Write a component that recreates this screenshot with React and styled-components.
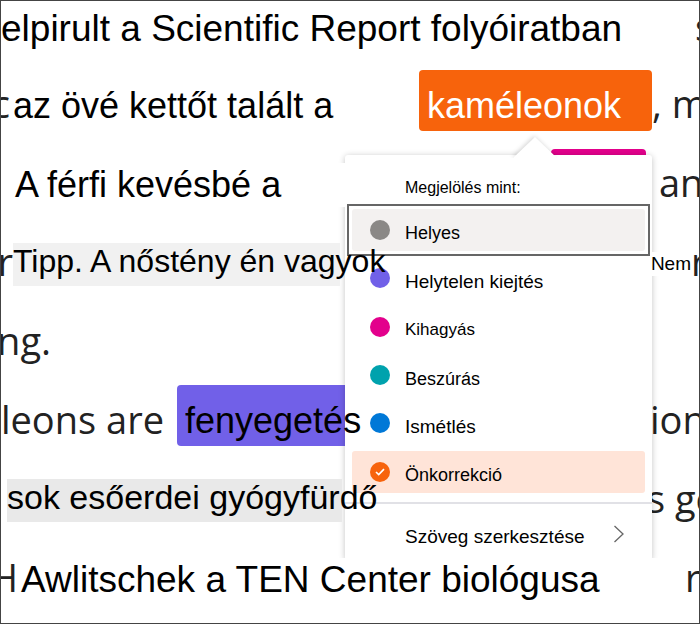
import React, { useState } from "react";
import styled, { createGlobalStyle } from "styled-components";

const MARKS = [
  { id: "correct", label: "Helyes", color: "#8a8886", size: 18 },
  { id: "mispronounced", label: "Helytelen kiejtés", color: "#7160e8", size: 19 },
  { id: "omission", label: "Kihagyás", color: "#e3008c", size: 17 },
  { id: "insertion", label: "Beszúrás", color: "#00a2ad", size: 18 },
  { id: "repetition", label: "Ismétlés", color: "#0078d7", size: 19 },
  { id: "selfCorrection", label: "Önkorrekció", color: "#f7630c", size: 18 },
];

export default function App() {
  return (
    <>
      <GlobalStyle />
      <Passage>
        <Line>
          <Text $size={37}>elpirult a Scientific Report folyóiratban</Text>
          <Trailing $width={4}>s</Trailing>
        </Line>
        <Line>
          <Leading $width={12} $gap={3}>c</Leading>
          <Text $size={36}>az övé kettőt talált a</Text>
          <Anchor>
            <Mark $color="#f7630c" $text="#fff" $width={233}>
              <span>kaméleonok</span>
            </Mark>
            <MarkMenu />
          </Anchor>
          <Trailing $width={47} $flush>, m</Trailing>
        </Line>
        <Line>
          <Leading $width={14} $gap={12}>.</Leading>
          <Text $size={36} $flex="0 1 330px">A férfi kevésbé a</Text>
          <Mark $color="#e3008c" $width={95} $push />
          <Trailing $width={53} $gap={13} $flush>an</Trailing>
        </Line>
        <Line>
          <Leading $width={12}>r</Leading>
          <Shaded $size={32} $color="#f1f1f1" $width={327}>
            Tipp. A nőstény én vagyok
          </Shaded>
          <Note>Nem</Note>
          <Trailing $width={8} $flush>r</Trailing>
        </Line>
        <Line>
          <Leading $width={50}>ng.</Leading>
        </Line>
        <Line>
          <Leading $width={176} $gap={13}>leons are</Leading>
          <Mark $color="#7160e8" $text="#000" $width={190}>
            <span>fenyegetés</span>
          </Mark>
          <Trailing $width={49}>ion</Trailing>
        </Line>
        <Line>
          <Leading $width={6} />
          <Shaded $size={34} $color="#e9e9e9" $width={335}>
            sok esőerdei gyógyfürdő
          </Shaded>
          <Trailing $width={52}>s ge</Trailing>
        </Line>
        <Line>
          <Leading $width={20} $gap={3}>H</Leading>
          <Text $size={37} $flex="1">Awlitschek a TEN Center biológusa</Text>
          <Trailing $width={14} $flush>r</Trailing>
        </Line>
      </Passage>
    </>
  );
}

function MarkMenu() {
  const [selected, setSelected] = useState("selfCorrection");

  return (
    <Menu role="menu" aria-labelledby="mark-menu-title">
      <Caret viewBox="0 0 42 21" aria-hidden="true">
        <path d="M0 20 L21 0 L42 20 V21 H0 Z" fill="#fff" />
      </Caret>
      <Title id="mark-menu-title">Megjelölés mint:</Title>
      <Items>
        {MARKS.map((mark, index) => (
          <Item
            key={mark.id}
            type="button"
            role="menuitemradio"
            aria-checked={selected === mark.id}
            $focused={index === 0}
            $selected={selected === mark.id}
            onClick={() => setSelected(mark.id)}
          >
            <Dot $color={mark.color}>
              {selected === mark.id && <Check />}
            </Dot>
            <Label $size={mark.size}>{mark.label}</Label>
          </Item>
        ))}
      </Items>
      <EditItem type="button" role="menuitem">
        <Label $size={19}>Szöveg szerkesztése</Label>
        <svg width="12" height="18" viewBox="0 0 12 18" aria-hidden="true">
          <path d="M1.5 1 L10 9 L1.5 17" fill="none" stroke="#666" strokeWidth="1.3" />
        </svg>
      </EditItem>
    </Menu>
  );
}

function Check() {
  return (
    <svg width="10" height="8" viewBox="0 0 10 8" aria-hidden="true">
      <path d="M1 4 L3.7 6.5 L9 1.2" fill="none" stroke="#fff" strokeWidth="1.7" />
    </svg>
  );
}

const GlobalStyle = createGlobalStyle`
  * {
    box-sizing: border-box;
  }

  body {
    margin: 0;
    background: #fff;
    color: #000;
    font-family: "Liberation Sans", Arial, sans-serif;
  }
`;

const Passage = styled.main`
  display: grid;
  grid-template-rows: 66px repeat(7, 1fr);
  min-height: 100vh;
  padding-bottom: 4px;
  border: 1px solid #444;
  overflow: hidden;
`;

const Line = styled.div`
  display: flex;
  align-items: center;
  min-width: 0;
  white-space: nowrap;

  &:first-child {
    padding-bottom: 11px;
  }
`;

/* passage text is drawn over the open menu */
const Text = styled.span`
  position: relative;
  z-index: 2;
  flex: ${(props) => props.$flex || "none"};
  background: #fff;
  font-size: ${(props) => props.$size}px;
  line-height: 44px;
`;

const Shaded = styled(Text)`
  width: ${(props) => props.$width}px;
  padding-bottom: 7px;
  background: ${(props) => props.$color};
  line-height: 36px;
`;

const Fragment = styled.span`
  flex: none;
  width: ${(props) => props.$width}px;
  padding-bottom: 6px;
  overflow: hidden;
  color: #222;
  font-family: "Open Sans", "Noto Sans", sans-serif;
  font-size: 38px;
  line-height: 52px;
`;

const Leading = styled(Fragment)`
  display: flex;
  justify-content: flex-end;
  padding-right: ${(props) => props.$gap || 0}px;
`;

const Trailing = styled(Fragment)`
  margin-left: ${(props) => (props.$flush ? 0 : "auto")};
  padding-left: ${(props) => props.$gap || 0}px;
`;

const Anchor = styled.div`
  position: relative;
  margin-left: auto;
`;

const Mark = styled.mark`
  display: block;
  flex: none;
  width: ${(props) => props.$width}px;
  height: 61px;
  margin-bottom: 12px;
  margin-left: ${(props) => (props.$push ? "auto" : 0)};
  padding: 14px 0 0 8px;
  border-radius: 4px;
  background: ${(props) => props.$color};
  color: ${(props) => props.$text};
  font-size: 36px;
  line-height: 44px;

  span {
    position: relative;
    z-index: 2;
  }
`;

const Note = styled.span`
  position: relative;
  z-index: 2;
  margin-left: auto;
  background: #fff;
  font-size: 19px;
  line-height: 24px;
`;

const Menu = styled.div`
  position: absolute;
  z-index: 1;
  top: calc(100% + 12px);
  right: 0;
  width: 307px;
  padding-top: 18px;
  border-radius: 3px;
  background: #fff;
  box-shadow: 0 1px 6px rgba(0, 0, 0, 0.24);
`;

const Caret = styled.svg`
  position: absolute;
  top: -18px;
  left: 169px;
  width: 42px;
  height: 21px;
  filter: drop-shadow(-1px -1px 2px rgba(0, 0, 0, 0.16));
  clip-path: inset(-6px -6px 0 -6px);
`;

const Title = styled.div`
  padding: 6px 60px;
  font-size: 16px;
  line-height: 18px;
`;

const Items = styled.div`
  display: flex;
  flex-direction: column;
  justify-content: space-between;
  height: 290px;
  padding: 6px 7px 0;
`;

const Item = styled.button`
  position: relative;
  display: flex;
  align-items: center;
  gap: 15px;
  height: 42px;
  padding: 0 18px;
  border: 0;
  border-radius: 3px;
  background: ${(props) =>
    props.$selected ? "#ffe4d8" : props.$focused ? "#f3f1f0" : "#fff"};
  color: #000;
  font-family: inherit;
  text-align: left;
  cursor: pointer;

  /* square focus ring */
  &::after {
    content: "";
    display: ${(props) => (props.$focused ? "block" : "none")};
    position: absolute;
    inset: -5px;
    border: 2px solid #666;
  }
`;

const Dot = styled.span`
  display: flex;
  align-items: center;
  justify-content: center;
  width: 20px;
  height: 20px;
  border-radius: 50%;
  background: ${(props) => props.$color};
`;

const Label = styled.span`
  padding-top: 7px;
  font-size: ${(props) => props.$size}px;
  line-height: 20px;
`;

const EditItem = styled.button`
  display: flex;
  align-items: center;
  justify-content: space-between;
  width: 100%;
  height: 58px;
  margin-top: 9px;
  padding: 4px 27px 0 60px;
  border: 0;
  border-top: 2px solid #e1e1e6;
  background: none;
  color: #000;
  font-family: inherit;
  cursor: pointer;
`;
